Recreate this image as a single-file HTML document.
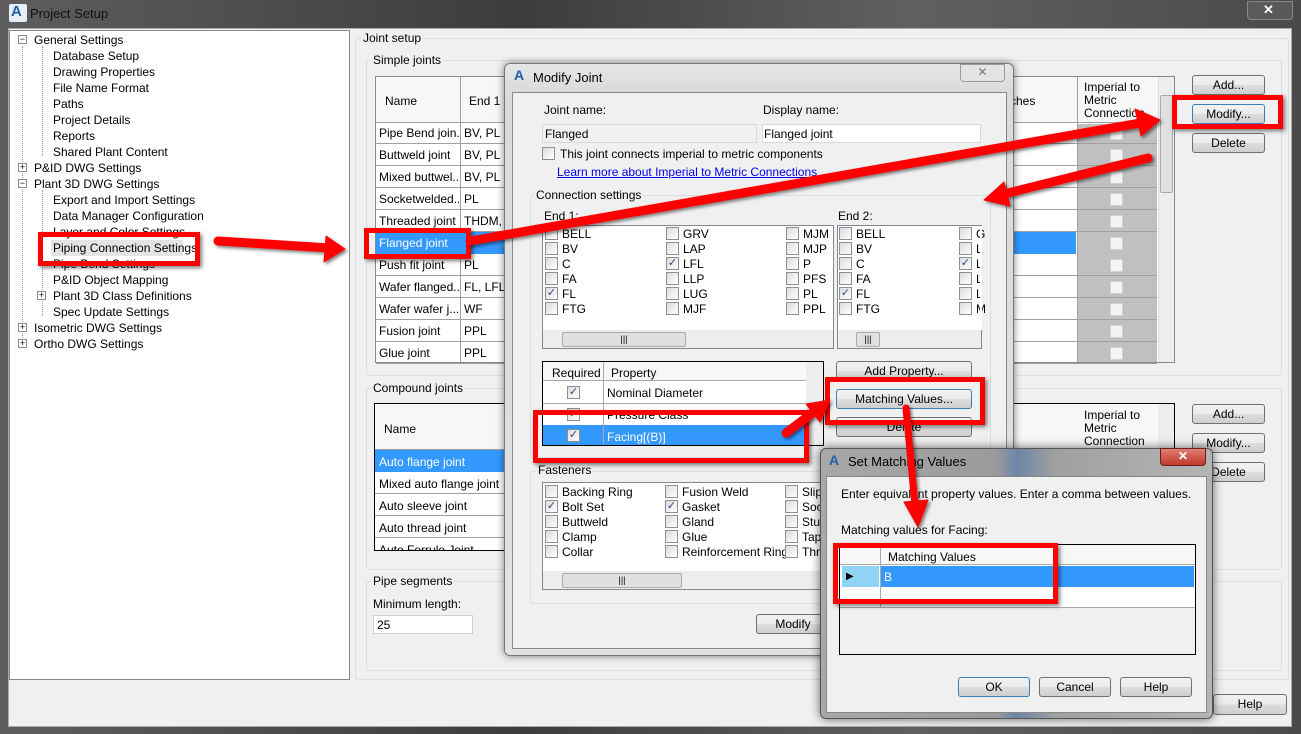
<!DOCTYPE html>
<html><head><meta charset="utf-8"><style>
*{box-sizing:border-box;margin:0;padding:0}
body{width:1301px;height:734px;overflow:hidden;position:relative;background:#4a4a4a;font:12px "Liberation Sans",sans-serif;color:#000}
.a{position:absolute}
.t{position:absolute;white-space:nowrap;font-size:12px;line-height:14px}
.box{position:absolute;border:1px solid #d5dfe5;border-radius:3px}
.btn{position:absolute;border:1px solid #707070;border-radius:3px;background:linear-gradient(#f2f2f2 0,#ebebeb 50%,#dddddd 51%,#cfcfcf 100%);text-align:center;font-size:12px;line-height:18px}
.cb{position:absolute;width:13px;height:13px;border:1px solid #8e8f8f;background:linear-gradient(135deg,#dcdcdc,#fff);font-size:11px;line-height:11px;text-align:center;color:#2a4a8a}
.wh{background:#fff}
.grid{position:absolute;background:#fff;border:1px solid #828790}
.row{position:absolute;left:0;right:0;border-bottom:1px solid #a0a0a0}
.red{position:absolute;border:5px solid #f00;box-shadow:2px 2px 4px rgba(0,0,0,.5)}
</style></head><body>
<div class="a" style="left:0;top:0;width:1301px;height:734px;background:linear-gradient(90deg,#5e5e5e,#3c3c3c 40%,#606060 70%,#4a4a4a)"></div>
<div class="a" style="left:9px;top:4px;width:18px;height:18px;background:#e8eef6;border-radius:2px"></div>
<div class="t" style="left:11px;top:5px;font-weight:bold;color:#1f5fa8;font-size:15px">A</div>
<div class="t" style="left:30px;top:7px;font-size:13px;color:#111">Project Setup</div>
<div class="a" style="left:1247px;top:1px;width:46px;height:19px;border:1px solid #888;border-radius:0 0 4px 4px;background:rgba(255,255,255,.08)"></div>
<div class="t" style="left:1263px;top:3px;color:#fff;font-weight:bold;font-size:13px">✕</div>
<div class="a" style="left:8px;top:28px;width:1284px;height:699px;background:#f0f0f0;border:1px solid #aaa"></div>
<div class="a wh" style="left:9px;top:30px;width:341px;height:650px;border:1px solid #828790"></div>
<div class="a" style="left:22px;top:46px;height:300px;border-left:1px dotted #999"></div>
<div class="a" style="left:42px;top:46px;height:110px;border-left:1px dotted #999"></div>
<div class="a" style="left:42px;top:190px;height:126px;border-left:1px dotted #999"></div>
<div class="a" style="left:18px;top:35px;width:9px;height:9px;border:1px solid #8a8a8a;background:#fff;font-size:9px;line-height:7px;text-align:center">−</div>
<div class="t" style="left:34px;top:33px">General Settings</div>
<div class="t" style="left:53px;top:49px">Database Setup</div>
<div class="t" style="left:53px;top:65px">Drawing Properties</div>
<div class="t" style="left:53px;top:81px">File Name Format</div>
<div class="t" style="left:53px;top:97px">Paths</div>
<div class="t" style="left:53px;top:113px">Project Details</div>
<div class="t" style="left:53px;top:129px">Reports</div>
<div class="t" style="left:53px;top:145px">Shared Plant Content</div>
<div class="a" style="left:18px;top:163px;width:9px;height:9px;border:1px solid #8a8a8a;background:#fff;font-size:9px;line-height:7px;text-align:center">+</div>
<div class="t" style="left:34px;top:161px">P&amp;ID DWG Settings</div>
<div class="a" style="left:18px;top:179px;width:9px;height:9px;border:1px solid #8a8a8a;background:#fff;font-size:9px;line-height:7px;text-align:center">−</div>
<div class="t" style="left:34px;top:177px">Plant 3D DWG Settings</div>
<div class="t" style="left:53px;top:193px">Export and Import Settings</div>
<div class="t" style="left:53px;top:209px">Data Manager Configuration</div>
<div class="t" style="left:53px;top:225px">Layer and Color Settings</div>
<div class="a" style="left:51px;top:240px;width:132px;height:16px;background:#e4e4e4"></div>
<div class="t" style="left:53px;top:241px">Piping Connection Settings</div>
<div class="t" style="left:53px;top:257px">Pipe Bend Settings</div>
<div class="t" style="left:53px;top:273px">P&amp;ID Object Mapping</div>
<div class="a" style="left:37px;top:291px;width:9px;height:9px;border:1px solid #8a8a8a;background:#fff;font-size:9px;line-height:7px;text-align:center">+</div>
<div class="t" style="left:53px;top:289px">Plant 3D Class Definitions</div>
<div class="t" style="left:53px;top:305px">Spec Update Settings</div>
<div class="a" style="left:18px;top:323px;width:9px;height:9px;border:1px solid #8a8a8a;background:#fff;font-size:9px;line-height:7px;text-align:center">+</div>
<div class="t" style="left:34px;top:321px">Isometric DWG Settings</div>
<div class="a" style="left:18px;top:339px;width:9px;height:9px;border:1px solid #8a8a8a;background:#fff;font-size:9px;line-height:7px;text-align:center">+</div>
<div class="t" style="left:34px;top:337px">Ortho DWG Settings</div>

<div class="box" style="left:355px;top:38px;width:934px;height:642px"></div>
<div class="t" style="left:361px;top:31px;background:#f0f0f0;padding:0 2px">Joint setup</div>
<div class="box" style="left:366px;top:60px;width:916px;height:316px"></div>
<div class="t" style="left:371px;top:53px;background:#f0f0f0;padding:0 2px">Simple joints</div>
<div class="grid" style="left:375px;top:76px;width:800px;height:287px;overflow:hidden">
 <div class="a" style="left:0;top:0;width:800px;height:46px;background:#f7f7f7;border-bottom:1px solid #a0a0a0"></div>
 <div class="t" style="left:9px;top:17px">Name</div><div class="t" style="left:93px;top:17px">End 1</div>
 <div class="t" style="left:634px;top:17px">ches</div>
 <div class="a" style="left:701px;top:47px;width:80px;height:240px;background:#c0c0c0"></div>
 <div class="t" style="left:708px;top:4px;line-height:13px">Imperial to<br>Metric<br>Connection</div>
 <div class="a" style="left:84px;top:0;height:287px;border-left:1px solid #a0a0a0"></div>
 <div class="a" style="left:701px;top:0;height:287px;border-left:1px solid #a0a0a0"></div>
 <div class="a" style="left:782px;top:0;width:17px;height:287px;background:#ededed;border-left:1px solid #ddd"></div>
 <div class="a" style="left:784px;top:18px;width:13px;height:98px;background:#e0e0e0;border:1px solid #aaa;border-radius:2px"></div>
</div>
<div id="rowsS"></div>
<div class="btn" style="left:1192px;top:75px;width:73px;height:20px">Add...</div>
<div class="btn" style="left:1192px;top:104px;width:73px;height:20px;border-color:#3c7fb1">Modify...</div>
<div class="btn" style="left:1192px;top:133px;width:73px;height:20px">Delete</div>

<div class="box" style="left:366px;top:388px;width:916px;height:182px"></div>
<div class="t" style="left:371px;top:381px;background:#f0f0f0;padding:0 2px">Compound joints</div>
<div class="grid" style="left:374px;top:403px;width:801px;height:148px;border-color:#000;overflow:hidden">
 <div class="a" style="left:0;top:0;width:800px;height:46px;background:#f7f7f7;border-bottom:1px solid #a0a0a0"></div>
 <div class="t" style="left:9px;top:18px">Name</div>
 <div class="t" style="left:709px;top:5px;line-height:13px">Imperial to<br>Metric<br>Connection</div>
 <div class="a" style="left:0;top:46px;width:800px;height:22px;background:#3399ff"></div>
 <div class="t" style="left:4px;top:51px;color:#fff">Auto flange joint</div>
 <div class="row" style="top:68px;height:22px"></div><div class="t" style="left:4px;top:73px">Mixed auto flange joint</div>
 <div class="row" style="top:90px;height:22px"></div><div class="t" style="left:4px;top:95px">Auto sleeve joint</div>
 <div class="row" style="top:112px;height:22px"></div><div class="t" style="left:4px;top:117px">Auto thread joint</div>
 <div class="t" style="left:4px;top:139px">Auto Ferrule Joint</div>
 <div class="a" style="left:783px;top:0;width:17px;height:148px;background:#ededed"></div>
</div>
<div class="btn" style="left:1192px;top:404px;width:73px;height:20px">Add...</div>
<div class="btn" style="left:1192px;top:433px;width:73px;height:20px">Modify...</div>
<div class="btn" style="left:1192px;top:462px;width:73px;height:20px">Delete</div>

<div class="box" style="left:366px;top:581px;width:916px;height:90px"></div>
<div class="t" style="left:371px;top:574px;background:#f0f0f0;padding:0 2px">Pipe segments</div>
<div class="t" style="left:373px;top:597px">Minimum length:</div>
<div class="a wh" style="left:373px;top:615px;width:100px;height:19px;border:1px solid #d0d0d0"></div>
<div class="t" style="left:377px;top:618px">25</div>
<div class="btn" style="left:1213px;top:694px;width:74px;height:21px">Help</div>

<div class="a" style="left:504px;top:63px;width:510px;height:593px;border:1px solid #777;border-radius:6px;background:linear-gradient(#e4e6e8,#d8dadc 30px,#e2e2e2);box-shadow:0 0 8px rgba(0,0,0,.5)"></div>
<div class="t" style="left:514px;top:68px;font-weight:bold;color:#1f5fa8;font-size:14px">A</div>
<div class="t" style="left:533px;top:71px;font-size:13px">Modify Joint</div>
<div class="a" style="left:960px;top:64px;width:45px;height:18px;border:1px solid #999;border-radius:0 0 4px 4px;background:#e4e4e4;text-align:center;color:#777;font-size:12px">✕</div>
<div class="a" style="left:512px;top:92px;width:495px;height:557px;background:#f0f0f0;border:1px solid #888"></div>
<div class="t" style="left:544px;top:103px">Joint name:</div>
<div class="t" style="left:763px;top:103px">Display name:</div>
<div class="a" style="left:542px;top:124px;width:215px;height:19px;background:#f0f0f0;border:1px solid #d8d8d8"></div>
<div class="t" style="left:545px;top:127px">Flanged</div>
<div class="a wh" style="left:762px;top:124px;width:219px;height:19px;border:1px solid #d8d8d8"></div>
<div class="t" style="left:764px;top:127px">Flanged joint</div>
<div class="cb" style="left:542px;top:147px"></div>
<div class="t" style="left:560px;top:147px">This joint connects imperial to metric components</div>
<div class="t" style="left:557px;top:165px;color:#0000ee;text-decoration:underline">Learn more about Imperial to Metric Connections</div>
<div class="box" style="left:530px;top:195px;width:461px;height:263px"></div>
<div class="t" style="left:534px;top:188px;background:#f0f0f0;padding:0 2px">Connection settings</div>
<div class="t" style="left:544px;top:209px">End 1:</div>
<div class="t" style="left:838px;top:209px">End 2:</div>
<div class="a wh" style="left:542px;top:225px;width:292px;height:124px;border:1px solid #828790"></div>
<div class="a" style="left:543px;top:330px;width:290px;height:18px;background:#ededed"></div>
<div class="a" style="left:562px;top:332px;width:124px;height:15px;background:#e0e0e0;border:1px solid #aaa;border-radius:2px;text-align:center;font-size:9px;line-height:12px">|||</div>
<div class="a wh" style="left:837px;top:225px;width:145px;height:124px;border:1px solid #828790;overflow:hidden"></div>
<div class="a" style="left:838px;top:330px;width:143px;height:18px;background:#ededed"></div>
<div class="a" style="left:856px;top:332px;width:24px;height:15px;background:#e0e0e0;border:1px solid #aaa;border-radius:2px;text-align:center;font-size:9px;line-height:12px">|||</div>
<div id="cbs"></div>
<div class="a wh" style="left:542px;top:361px;width:282px;height:85px;border:1px solid #000"></div>
<div class="a" style="left:543px;top:362px;width:263px;height:19px;background:#f7f7f7;border-bottom:1px solid #aaa"></div>
<div class="t" style="left:552px;top:366px">Required</div><div class="t" style="left:611px;top:366px">Property</div>
<div class="a" style="left:603px;top:362px;height:83px;border-left:1px solid #aaa"></div>
<div class="a" style="left:543px;top:403px;width:263px;border-top:1px solid #aaa"></div>
<div class="cb" style="left:567px;top:386px">✓</div><div class="t" style="left:607px;top:386px">Nominal Diameter</div>
<div class="cb" style="left:567px;top:408px">✓</div><div class="t" style="left:607px;top:408px">Pressure Class</div>
<div class="a" style="left:543px;top:425px;width:263px;height:20px;background:#3399ff"></div>
<div class="a" style="left:603px;top:425px;height:20px;border-left:1px solid #aaa"></div>
<div class="cb" style="left:567px;top:429px">✓</div><div class="t" style="left:607px;top:430px;color:#fff">Facing[(B)]</div>
<div class="a" style="left:806px;top:362px;width:17px;height:83px;background:#ededed"></div>
<div class="btn" style="left:836px;top:361px;width:136px;height:20px">Add Property...</div>
<div class="btn" style="left:836px;top:389px;width:136px;height:20px;border-color:#3c7fb1">Matching Values...</div>
<div class="btn" style="left:836px;top:417px;width:136px;height:20px">Delete</div>
<div class="box" style="left:530px;top:471px;width:461px;height:133px"></div>
<div class="t" style="left:536px;top:463px;background:#f0f0f0;padding:0 2px">Fasteners</div>
<div class="a wh" style="left:542px;top:482px;width:280px;height:108px;border:1px solid #828790"></div>
<div class="a" style="left:543px;top:571px;width:278px;height:18px;background:#ededed"></div>
<div class="a" style="left:562px;top:573px;width:120px;height:15px;background:#e0e0e0;border:1px solid #aaa;border-radius:2px;text-align:center;font-size:9px;line-height:12px">|||</div>
<div id="fas"></div>
<div class="btn" style="left:756px;top:614px;width:74px;height:20px">Modify</div>

<div class="a" style="left:820px;top:448px;width:393px;height:271px;border:1px solid #555;border-radius:6px;background:linear-gradient(90deg,#a8a8a8,#9a9a9a 45%,#6c86a8 50%,#a0a0a0 60%,#b4b4b4);box-shadow:0 0 10px rgba(0,0,0,.6)"></div>
<div class="t" style="left:829px;top:453px;font-weight:bold;color:#1f5fa8;font-size:14px">A</div>
<div class="t" style="left:848px;top:455px;font-size:13px">Set Matching Values</div>
<div class="a" style="left:1160px;top:448px;width:46px;height:18px;border:1px solid #6a2020;border-radius:0 0 4px 4px;background:linear-gradient(#e08070,#c0392b);text-align:center;color:#fff;font-weight:bold">✕</div>
<div class="a" style="left:826px;top:476px;width:381px;height:237px;background:#f0f0f0;border:1px solid #888"></div>
<div class="t" style="left:841px;top:487px">Enter equivalent property values. Enter a comma between values.</div>
<div class="t" style="left:841px;top:523px">Matching values for Facing:</div>
<div class="a" style="left:839px;top:544px;width:357px;height:111px;border:1px solid #000;background:#f0f0f0"></div>
<div class="a" style="left:840px;top:545px;width:355px;height:62px;background:#fff"></div>
<div class="a" style="left:840px;top:545px;width:355px;height:20px;background:#f7f7f7;border-bottom:1px solid #aaa"></div>
<div class="t" style="left:888px;top:550px">Matching Values</div>
<div class="a" style="left:880px;top:545px;height:62px;border-left:1px solid #aaa"></div>
<div class="a" style="left:842px;top:566px;width:37px;height:21px;background:#8fd3f5"></div>
<div class="t" style="left:846px;top:570px;font-size:10px">▶</div>
<div class="a" style="left:881px;top:566px;width:313px;height:21px;background:#3399ff"></div>
<div class="t" style="left:884px;top:570px;color:#fff">B</div>
<div class="a" style="left:840px;top:607px;width:355px;border-top:1px solid #aaa"></div>
<div class="btn" style="left:958px;top:677px;width:72px;height:20px;border-color:#3c7fb1">OK</div>
<div class="btn" style="left:1039px;top:677px;width:72px;height:20px">Cancel</div>
<div class="btn" style="left:1120px;top:677px;width:72px;height:20px">Help</div>

<div class="red" style="left:38px;top:232px;width:162px;height:34px"></div>
<div class="red" style="left:364px;top:228px;width:107px;height:31px"></div>
<div class="red" style="left:1172px;top:95px;width:111px;height:34px"></div>
<div class="red" style="left:533px;top:410px;width:276px;height:53px"></div>
<div class="red" style="left:825px;top:377px;width:160px;height:48px"></div>
<div class="red" style="left:833px;top:543px;width:225px;height:61px"></div>

<svg class="a" style="left:0;top:0" width="1301" height="734" viewBox="0 0 1301 734">
<defs><filter id="s"><feDropShadow dx="2" dy="2" stdDeviation="1.5" flood-opacity=".5"/></filter></defs>
<g fill="#f00" stroke="#f00" stroke-linejoin="round" stroke-linecap="round" filter="url(#s)">
<line x1="218" y1="241" x2="330" y2="248" stroke-width="9"/>
<polygon points="345,249 326,236 324,262"/>
<line x1="470" y1="241" x2="1140" y2="123" stroke-width="9"/>
<polygon points="1160,120 1135,109 1141,136"/>
<line x1="1148" y1="158" x2="1000" y2="195" stroke-width="9"/>
<polygon points="984,200 1004,182 1010,206"/>
<line x1="786" y1="433" x2="815" y2="411" stroke-width="9"/>
<polygon points="830,400 806,404 820,422"/>
<line x1="906" y1="408" x2="915" y2="505" stroke-width="7"/>
<polygon points="918,527 904,502 928,500"/>
</g>
</svg>

<script>
(function(){
var rows=[["Pipe Bend join...","BV, PL"],["Buttweld joint","BV, PL"],["Mixed buttwel...","BV, PL"],["Socketwelded...","PL"],["Threaded joint","THDM, I"],["Flanged joint",""],["Push fit joint","PL"],["Wafer flanged...","FL, LFL"],["Wafer wafer j...","WF"],["Fusion joint","PPL"],["Glue joint","PPL"]];
var h="";
rows.forEach(function(r,i){var y=122+i*22;var s=i==5;
 if(s)h+='<div class="a" style="left:376px;top:'+y+'px;width:700px;height:22px;background:#3399ff"></div>';
 else h+='<div class="a" style="left:376px;top:'+(y+21)+'px;width:781px;border-top:1px solid #a0a0a0"></div>';
 h+='<div class="t" style="left:379px;top:'+(y+4)+'px;width:80px;overflow:hidden;'+(s?'color:#fff':'')+'">'+r[0]+'</div>';
 h+='<div class="t" style="left:464px;top:'+(y+4)+'px;'+(s?'color:#fff':'')+'">'+r[1]+'</div>';
 h+='<div class="a" style="left:1110px;top:'+(y+5)+'px;width:13px;height:13px;background:#f4f4f4;border:1px solid #d0d0d0"></div>';
});
document.getElementById("rowsS").outerHTML=h;
function cb(x,y,t,c){return '<div class="cb" style="left:'+x+'px;top:'+y+'px">'+(c?'✓':'')+'</div><div class="t" style="left:'+(x+17)+'px;top:'+y+'px">'+t+'</div>';}
var c1=["BELL","BV","C","FA","FL","FTG"],c2=["GRV","LAP","LFL","LLP","LUG","MJF"],c3=["MJM","MJP","P","PFS","PL","PPL"];
var g="";
for(var i=0;i<6;i++){var y=227+i*15;
 g+=cb(545,y,c1[i],i==4);g+=cb(666,y,c2[i],i==2);g+=cb(786,y,c3[i],false);
 g+=cb(839,y,c1[i],i==4);g+='<div class="cb" style="left:959px;top:'+y+'px">'+(i==2?'✓':'')+'</div><div class="t" style="left:976px;top:'+y+'px">'+c2[i].charAt(0)+'</div>';}
document.getElementById("cbs").outerHTML=g+'<div class="a" style="left:980px;top:226px;width:2px;height:104px;background:#fff"></div>';
var f1=["Backing Ring","Bolt Set","Buttweld","Clamp","Collar"],f2=["Fusion Weld","Gasket","Gland","Glue","Reinforcement Ring"],f3=["Slip","Soc","Stu","Tap","Thr"];
var f="";
for(var i=0;i<5;i++){var y=485+i*15;f+=cb(545,y,f1[i],i==1)+cb(665,y,f2[i],i==1)+cb(785,y,f3[i],false);}
document.getElementById("fas").outerHTML=f+'<div class="a" style="left:820px;top:483px;width:3px;height:88px;background:#f0f0f0"></div>';
})();
</script>
</body></html>
